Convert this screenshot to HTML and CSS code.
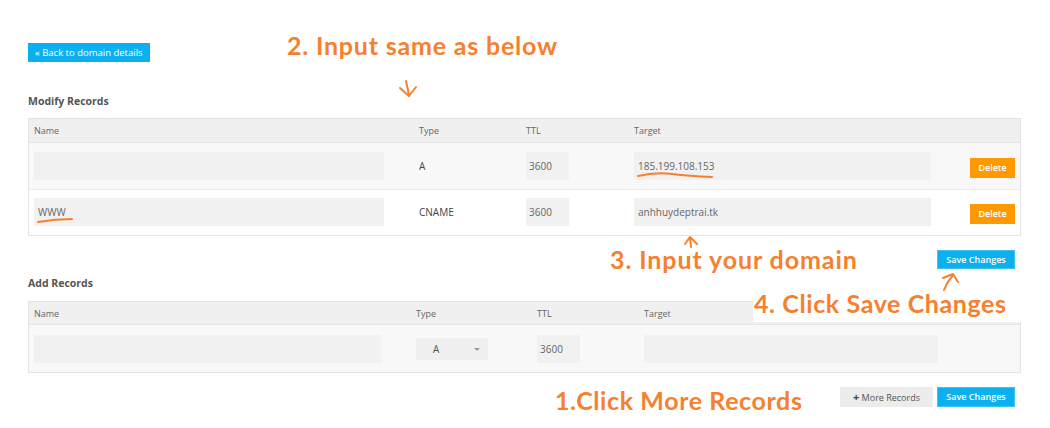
FILE: index.html
```html
<!DOCTYPE html>
<html lang="en">
<head>
<meta charset="utf-8">
<title>Modify Records</title>
<link rel="stylesheet" href="styles.css">
</head>
<body>
<div class="page">
  <div class="content">
    <div class="back-wrap"><a class="btn btn-info back">« Back to domain details</a></div>

    <h3 class="section-title first">Modify Records</h3>
    <div class="records modify">
      <div class="row head">
        <div>Name</div><div>Type</div><div>TTL</div><div>Target</div><div></div>
      </div>
      <div class="row body">
        <div><div class="field name"></div></div>
        <div class="type">A</div>
        <div><div class="field ttl">3600</div></div>
        <div><div class="field target">185.199.108.153</div></div>
        <div><button class="btn delete">Delete</button></div>
      </div>
      <div class="row body alt">
        <div><div class="field name">WWW</div></div>
        <div class="type">CNAME</div>
        <div><div class="field ttl">3600</div></div>
        <div><div class="field target">anhhuydeptrai.tk</div></div>
        <div><button class="btn delete">Delete</button></div>
      </div>
    </div>
    <div class="actions top-actions"><button class="btn btn-info save">Save Changes</button></div>

    <h3 class="section-title second">Add Records</h3>
    <div class="records add">
      <div class="row head">
        <div>Name</div><div>Type</div><div>TTL</div><div>Target</div>
      </div>
      <div class="row body">
        <div><div class="field name2"></div></div>
        <div><div class="select">A<span class="caret"></span></div></div>
        <div><div class="field ttl">3600</div></div>
        <div><div class="field target2"></div></div>
      </div>
    </div>
    <div class="actions bottom-actions">
      <button class="btn more"><span class="plus">+</span> More Records</button>
      <button class="btn btn-info save">Save Changes</button>
    </div>
  </div>

  <div class="note n2">2. Input same as below</div>
  <div class="note n3">3. Input your domain</div>
  <div class="note n4">4. Click Save Changes</div>
  <div class="note n1">1.Click More Records</div>

  <svg class="doodles" width="1050" height="428" viewBox="0 0 1050 428">
    <g fill="none" stroke="#f7802f" stroke-width="2" stroke-linecap="round" stroke-linejoin="round">
      <path d="M406 81 Q408 89 409 96"/>
      <path d="M400 88 L409 96 L416 87"/>
      <path d="M38 222 Q55 219 72 219"/>
      <path d="M638 176 Q655 172 672 174 T712 177"/>
      <path d="M685 244 L690 237 L697 244"/>
      <path d="M690 238 L691 247"/>
      <path d="M944 290 Q947 282 953 275"/>
      <path d="M943 278 L953 274 L958 282"/>
    </g>
  </svg>
</div>
</body>
</html>
```

FILE: styles.css
```css
* { box-sizing: border-box; }

html, body {
  margin: 0;
  padding: 0;
  background: #fff;
}

.page {
  position: relative;
  width: 1050px;
  height: 428px;
  padding-left: 28px;
  overflow: hidden;
  font-family: "Open Sans", "Liberation Sans", sans-serif;
  color: #555;
}

.content {
  width: 993px;
}

.back-wrap {
  display: flex;
  padding-top: 43px;
}

.btn {
  display: inline-block;
  border: 0;
  margin: 0;
  font-family: "Open Sans", "Liberation Sans", sans-serif;
  cursor: pointer;
  text-decoration: none;
}

.btn-info {
  background: #0bb1ee;
  color: #fff;
}

.back {
  height: 19px;
  line-height: 19px;
  padding: 0 7px;
  font-size: 9.5px;
}

.section-title {
  margin: 0;
  font-size: 10.5px;
  line-height: 14px;
  font-weight: 700;
  color: #555;
}

.section-title.first {
  margin-top: 32px;
  margin-bottom: 10px;
}

.section-title.second {
  margin-top: 7px;
  margin-bottom: 11px;
}

.records {
  border: 1px solid #e4e4e4;
}

.row {
  display: grid;
  align-items: center;
  padding-left: 5px;
  padding-right: 5px;
}

.modify .row {
  grid-template-columns: 385px 107px 108px 336px 45px;
}

.add .row {
  grid-template-columns: 382px 121px 107px 1fr;
}

.head {
  height: 24px;
  background: #f0f0f0;
  border-bottom: 1px solid #e6e6e6;
  font-size: 9px;
  color: #666;
}

.add .head {
  height: 23px;
}

.body {
  background: #f8f8f8;
  padding-top: 9px;
  padding-bottom: 9px;
  border-bottom: 1px solid #ececec;
}

.add .body {
  padding-top: 10px;
  padding-bottom: 9px;
  border-bottom: 0;
}

.body.alt {
  background: #fff;
  padding-top: 8px;
  border-bottom: 0;
}

.field {
  height: 28px;
  line-height: 28px;
  background: #f1f1f1;
  font-size: 10px;
  color: #666;
  padding: 0 4px;
}

.field.name { width: 350px; }
.field.name2 { width: 347px; }
.field.ttl { width: 43px; padding: 0 3px; }
.field.target { width: 297px; }
.field.target2 { width: 294px; }

.type {
  font-size: 10px;
  color: #444;
}

.delete {
  width: 45px;
  height: 20px;
  line-height: 20px;
  padding: 0;
  background: #ff9900;
  color: #fff;
  font-size: 9px;
  font-weight: 600;
  text-align: center;
}

.actions {
  display: flex;
  justify-content: flex-end;
  gap: 4px;
  padding-right: 6px;
}

.top-actions {
  margin-top: 14px;
}

.bottom-actions {
  margin-top: 14px;
}

.save {
  width: 78px;
  height: 19px;
  padding: 0;
  font-size: 9px;
  font-weight: 600;
  text-align: center;
  border: 1px solid #3fc2f2;
  line-height: 17px;
}

.bottom-actions .save {
  height: 20px;
  line-height: 18px;
}

.more {
  width: 93px;
  height: 20px;
  line-height: 20px;
  padding: 0;
  background: #ececec;
  color: #555;
  font-size: 9px;
  text-align: center;
}

.plus {
  font-weight: 700;
  font-size: 11px;
  color: #444;
}

.select {
  position: relative;
  width: 72px;
  height: 22px;
  line-height: 22px;
  background: #f0f0f0;
  font-size: 10px;
  color: #555;
  padding-left: 17px;
}

.caret {
  position: absolute;
  right: 8px;
  top: 10px;
  width: 0;
  height: 0;
  border-left: 3px solid transparent;
  border-right: 3px solid transparent;
  border-top: 3px solid #999;
}

.note {
  position: absolute;
  font-family: Lato, "Open Sans", sans-serif;
  font-weight: 700;
  font-size: 25px;
  line-height: 24px;
  letter-spacing: 0.8px;
  color: #f7802f;
  white-space: nowrap;
}

.n2 { left: 287px; top: 33px; }
.n3 { left: 610px; top: 247px; letter-spacing: 0.9px; }
.n1 { left: 555px; top: 388px; letter-spacing: 0.6px; }
.n4 {
  left: 753px;
  top: 286px;
  width: 272px;
  height: 36px;
  padding: 5px 0 0 1px;
  background: #fff;
  letter-spacing: 0.6px;
}

.doodles {
  position: absolute;
  left: 0;
  top: 0;
  pointer-events: none;
}
```
